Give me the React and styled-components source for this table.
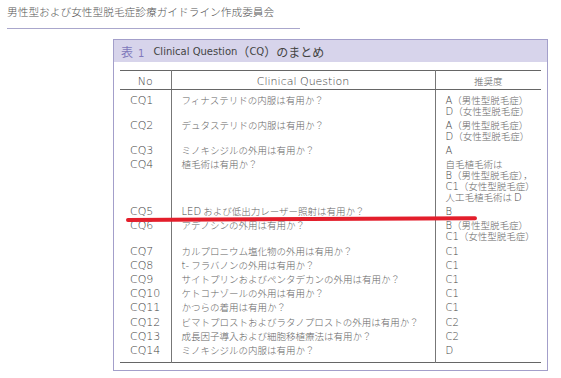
import styled, { createGlobalStyle } from "styled-components";

const GlobalStyle = createGlobalStyle`
  body {
    margin: 0;
    background: #fff;
  }
`;

const CJK = `"Noto Sans CJK JP", sans-serif`;
const LATIN = `"DejaVu Sans", "Noto Sans CJK JP", sans-serif`;

const rows = [
  { no: "CQ1", q: "フィナステリドの内服は有用か？", rec: ["A（男性型脱毛症）", "D（女性型脱毛症）"] },
  { no: "CQ2", q: "デュタステリドの内服は有用か？", rec: ["A（男性型脱毛症）", "D（女性型脱毛症）"] },
  { no: "CQ3", q: "ミノキシジルの外用は有用か？", rec: ["A"] },
  {
    no: "CQ4",
    q: "植毛術は有用か？",
    rec: ["自毛植毛術は", "B（男性型脱毛症），", "C1（女性型脱毛症）", "人工毛植毛術は D"],
  },
  { no: "CQ5", q: "LED および低出力レーザー照射は有用か？", rec: ["B"] },
  { no: "CQ6", q: "アデノシンの外用は有用か？", rec: ["B（男性型脱毛症）", "C1（女性型脱毛症）"] },
  { no: "CQ7", q: "カルプロニウム塩化物の外用は有用か？", rec: ["C1"] },
  { no: "CQ8", q: "t- フラバノンの外用は有用か？", rec: ["C1"] },
  { no: "CQ9", q: "サイトプリンおよびペンタデカンの外用は有用か？", rec: ["C1"] },
  { no: "CQ10", q: "ケトコナゾールの外用は有用か？", rec: ["C1"] },
  { no: "CQ11", q: "かつらの着用は有用か？", rec: ["C1"] },
  { no: "CQ12", q: "ビマトプロストおよびラタノプロストの外用は有用か？", rec: ["C2"] },
  { no: "CQ13", q: "成長因子導入および細胞移植療法は有用か？", rec: ["C2"] },
  { no: "CQ14", q: "ミノキシジルの内服は有用か？", rec: ["D"] },
];

const Page = styled.div`
  width: 561px;
  height: 378px;
  overflow: hidden;
  font-family: ${CJK};
  font-weight: 300;
  color: #666;
`;

const RunningHead = styled.div`
  box-sizing: content-box;
  margin-left: 7px;
  width: 293px;
  height: 23px;
  padding-top: 5px;
  border-bottom: 1px solid #aaa7cc;
  font-size: 10.7px;
  line-height: 14px;
  color: #555;
  white-space: nowrap;
`;

const Frame = styled.div`
  position: relative;
  box-sizing: border-box;
  width: 435px;
  margin: 10px 0 0 113px;
  padding-bottom: 7px;
  border: 1px solid #a39fca;
  background: #fff;
`;

const Band = styled.div`
  height: 22px;
  display: flex;
  align-items: center;
  padding-left: 7px;
  background: #d7d4eb;
  font-size: 12px;
  font-weight: 400;
  color: #444;
  white-space: nowrap;
`;

const Mark = styled.span`
  color: #8078bb;
  margin-right: 9px;
`;

const Lat = styled.span`
  font-family: ${LATIN};
  font-weight: ${(p) => p.$weight || 200};
  font-size: ${(p) => p.$size}px;
  margin-left: ${(p) => p.$gap || 0}px;
  color: ${(p) => p.$tone || "#444"};
`;

const Table = styled.table`
  width: 421px;
  margin: 8px 5px 0 6px;
  border-collapse: collapse;
  table-layout: fixed;
  border-top: 1px solid #666;
  border-bottom: 1px solid #666;
`;

const Head = styled.th`
  height: 18px;
  padding: 3px 0 0;
  box-sizing: border-box;
  font-family: ${(p) => (p.$cjk ? CJK : LATIN)};
  font-size: ${(p) => (p.$cjk ? 9.5 : 11)}px;
  font-weight: ${(p) => (p.$cjk ? 300 : 200)};
  line-height: 15px;
  color: ${(p) => (p.$cjk ? "#666" : "#444")};
  text-align: center;
  vertical-align: middle;
  border-bottom: 1px solid #666;
  border-left: ${(p) => (p.$first ? "none" : "1px solid #777")};
`;

const Cell = styled.td`
  padding: ${(p) => (p.$top ? 4.5 : 1.6)}px 0 ${(p) => (p.$bottom ? 5.9 : 1.6)}px 10px;
  vertical-align: top;
  font-family: ${(p) => (p.$latin ? LATIN : CJK)};
  font-weight: ${(p) => (p.$latin ? 200 : 300)};
  font-size: ${(p) => (p.$latin ? 11 : 9.5)}px;
  color: ${(p) => (p.$latin ? "#444" : "#666")};
  border-left: ${(p) => (p.$first ? "none" : "1px solid #777")};
`;

const Line = styled.div`
  height: 11px;
  line-height: 11px;
  white-space: nowrap;
`;

// hand-drawn red marker stroke under the CQ5 row
const Marker = styled.div`
  position: absolute;
  left: 12px;
  top: 177.5px;
  width: 351px;
  height: 3.5px;
  border-radius: 2px;
  background: #e31e2b;
  transform: rotate(-0.3deg);
  transform-origin: left center;
`;

// Latin runs get their own face and size, the rest stays in the CJK face
const mix = (text, size, weight, tone) =>
  text.split(/([A-Za-z0-9-]+(?: [A-Za-z0-9-]+)*)/).map((part, i) =>
    i % 2 ? (
      <Lat key={i} $size={size} $weight={weight} $tone={tone}>
        {part}
      </Lat>
    ) : (
      part
    )
  );

export default function App() {
  const last = rows.length - 1;
  return (
    <Page>
      <GlobalStyle />
      <RunningHead>男性型および女性型脱毛症診療ガイドライン作成委員会</RunningHead>
      <Frame>
        <Band>
          <Mark>
            表
            <Lat $size={10} $gap={5} $weight={400} $tone="#8078bb">
              1
            </Lat>
          </Mark>
          {mix("Clinical Question（CQ）のまとめ", 10, 400, "#444")}
        </Band>
        <Table>
          <colgroup>
            <col style={{ width: 51 }} />
            <col style={{ width: 264 }} />
            <col style={{ width: 106 }} />
          </colgroup>
          <thead>
            <tr>
              <Head $first>No</Head>
              <Head>Clinical Question</Head>
              <Head $cjk>推奨度</Head>
            </tr>
          </thead>
          <tbody>
            {rows.map((r, i) => (
              <tr key={r.no}>
                <Cell $first $latin $top={i === 0} $bottom={i === last}>
                  <Line>{r.no}</Line>
                </Cell>
                <Cell $top={i === 0} $bottom={i === last}>
                  <Line>{mix(r.q, 10)}</Line>
                </Cell>
                <Cell $top={i === 0} $bottom={i === last}>
                  {r.rec.map((t) => (
                    <Line key={t}>{mix(t, 10)}</Line>
                  ))}
                </Cell>
              </tr>
            ))}
          </tbody>
        </Table>
        <Marker />
      </Frame>
    </Page>
  );
}
